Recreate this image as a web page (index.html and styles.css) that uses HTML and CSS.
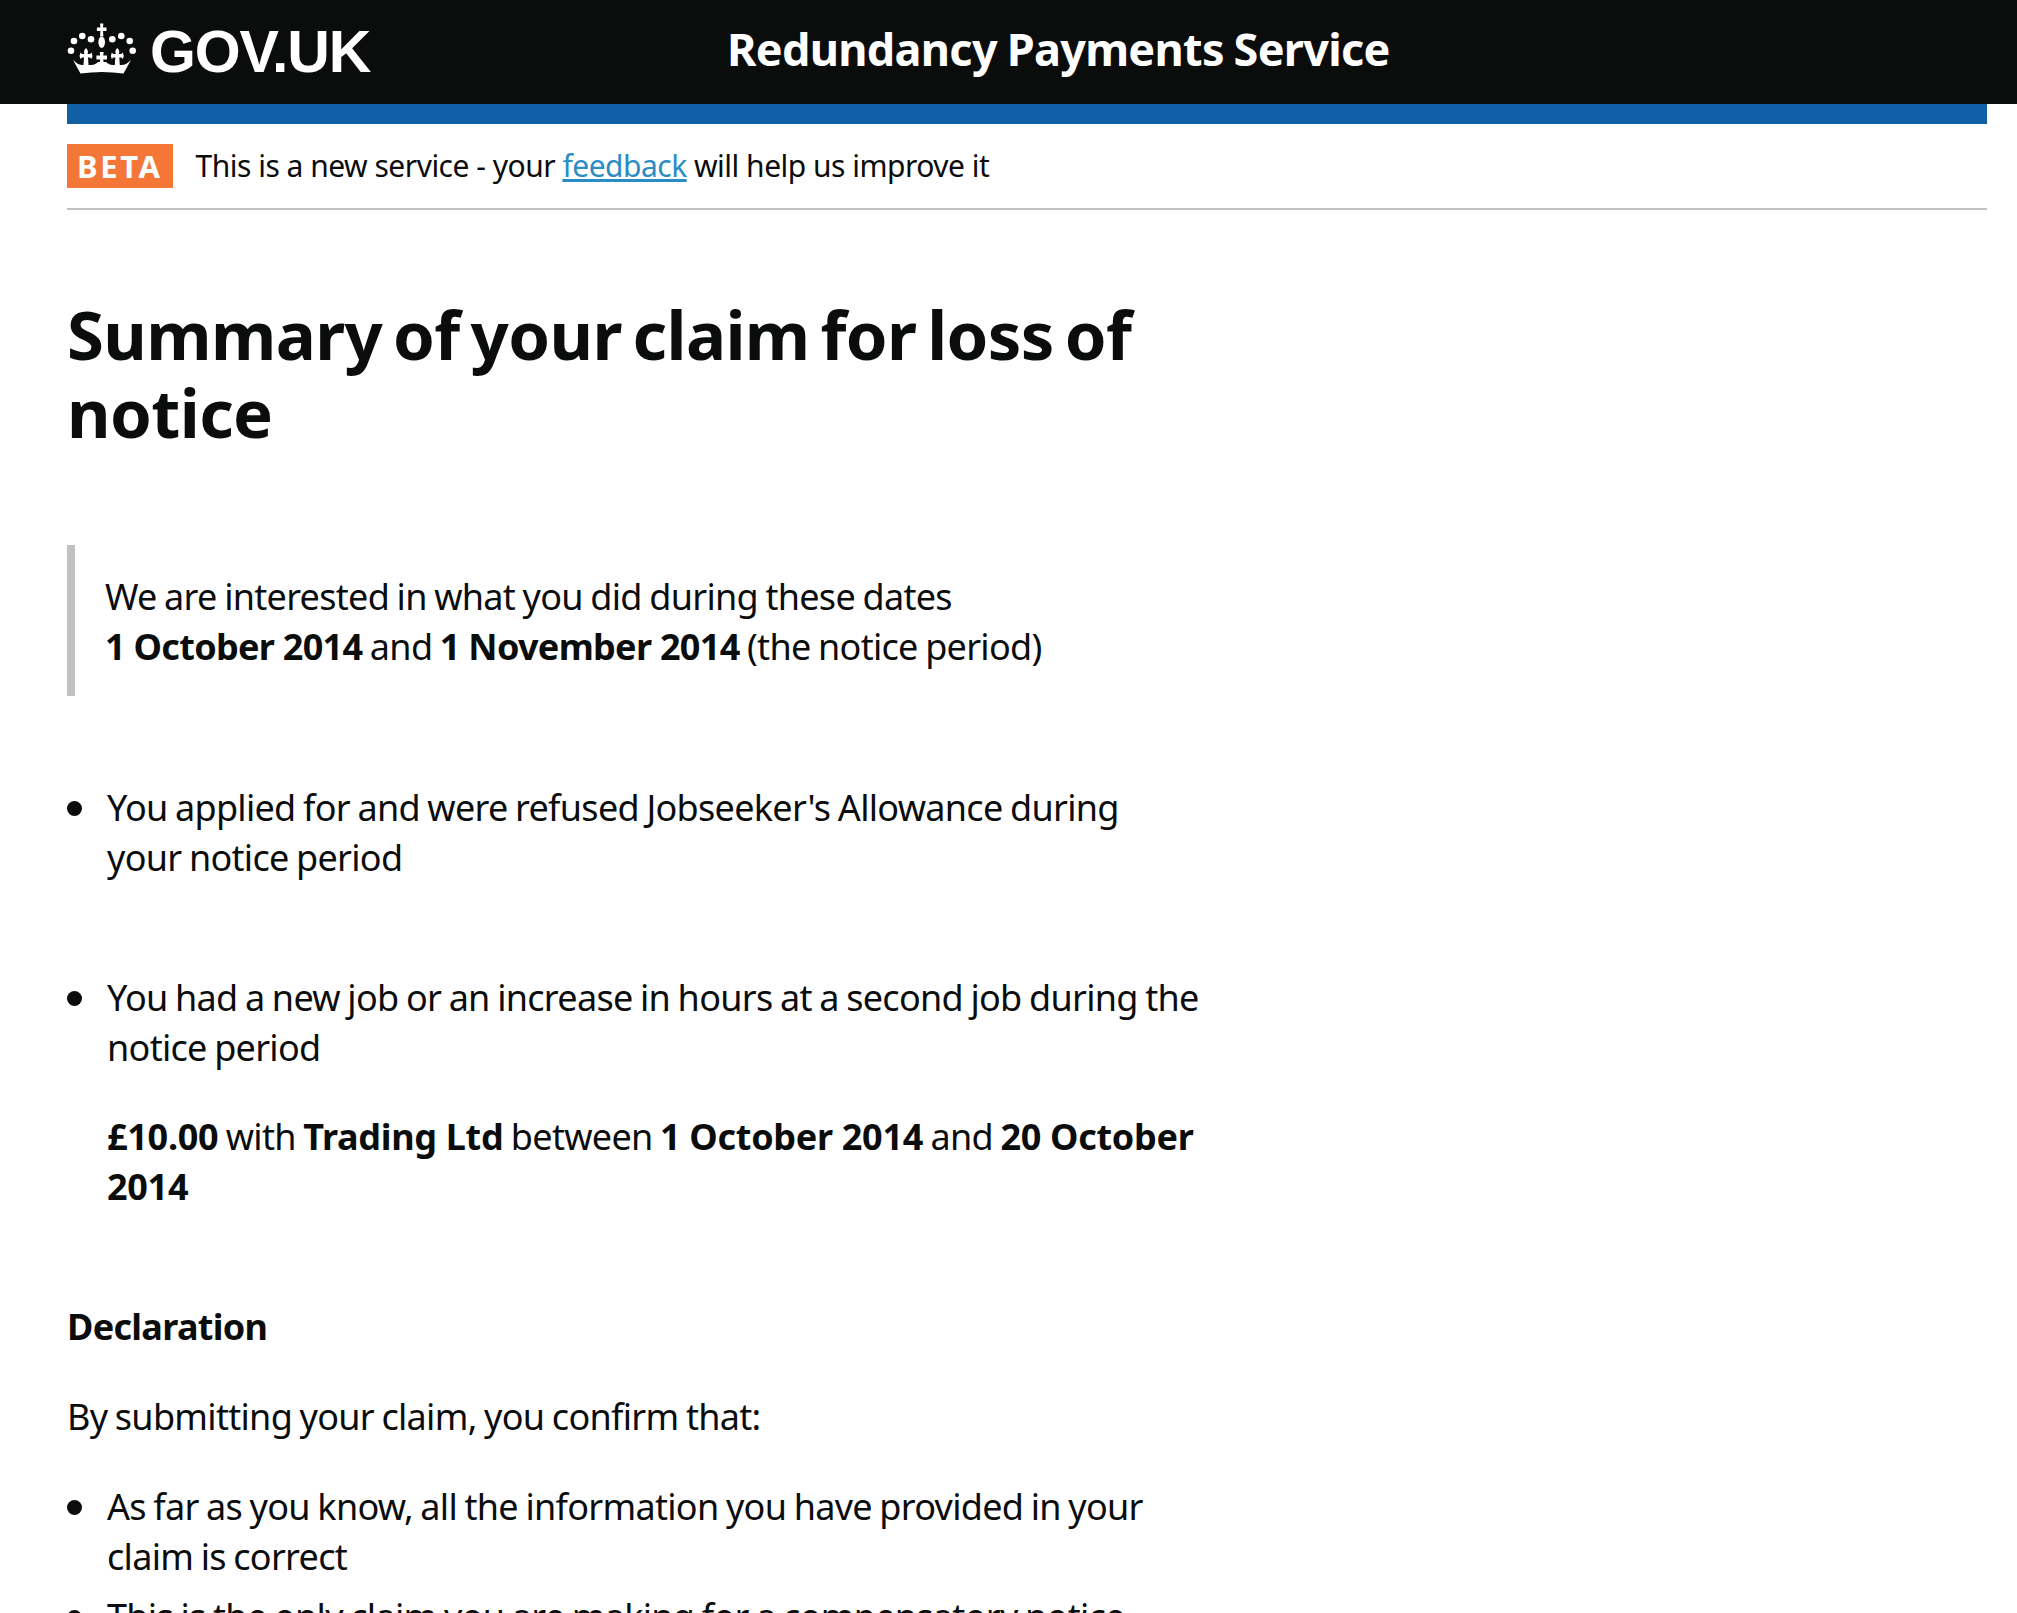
FILE: index.html
```html
<!DOCTYPE html>
<html>
<head>
<title>Summary of your claim for loss of notice</title>
<link rel="stylesheet" href="styles.css">
</head>
<body>
<header class="site-header">
  <a class="logo" href="#">
    <svg class="crown" viewBox="0 0 70 60" width="70" height="60">
      <g fill="#fff">
        <path d="M33 1.5H36.4L36 5.5H39.5V9H36L36.4 14.5H33L33.4 9H29.9V5.5H33.4Z"/>
        <ellipse cx="34.7" cy="20.3" rx="3.3" ry="5.7"/>
        <circle cx="24" cy="17.3" r="3.3"/>
        <circle cx="45.3" cy="17.3" r="3.3"/>
        <circle cx="15.3" cy="14" r="3.3"/>
        <circle cx="54.3" cy="14" r="3.3"/>
        <circle cx="7" cy="19" r="3.3"/>
        <circle cx="62.7" cy="19" r="3.3"/>
        <circle cx="4" cy="28.7" r="3.3"/>
        <circle cx="65.7" cy="28.7" r="3.3"/>
        <path d="M6 38C9 41 12 43 16 43H24C27 43 29 42 31 40H39C41 42 43 43 46 43H54C58 43 61 41 64 38L56.5 51.5Q35 48.5 13.5 51.5Z"/>
        <path d="M19 26C21 28 21.5 30 20.5 32H23L24.5 30.5 25.5 34 24.5 37 23 35.5H21L21.5 43H16.5L17 35.5H15L13.5 37 12.5 34 13.5 30.5 15 32H17.5C16.5 30 17 28 19 26Z"/>
        <path d="M19 26C21 28 21.5 30 20.5 32H23L24.5 30.5 25.5 34 24.5 37 23 35.5H21L21.5 43H16.5L17 35.5H15L13.5 37 12.5 34 13.5 30.5 15 32H17.5C16.5 30 17 28 19 26Z" transform="translate(31.3 0)"/>
        <path d="M32.7 30H36.7L36.2 33.5H40V37.5H36.2L36.7 41H32.7L33.2 37.5H29.4V33.5H33.2Z"/>
      </g>
    </svg>
    <span class="logo-text">GOV.UK</span>
  </a>
  <a class="service-name" href="#">Redundancy Payments Service</a>
</header>

<div class="page">
  <div class="blue-bar"></div>
  <div class="phase-banner">
    <strong class="phase-tag">BETA</strong>
    <span>This is a new service - your <a href="#">feedback</a> will help us improve it</span>
  </div>

  <main class="main-col">
    <h1>Summary of your claim for loss of notice</h1>

    <div class="inset">
      We are interested in what you did during these dates<br>
      <b>1 October 2014</b> and <b>1 November 2014</b> (the notice period)
    </div>

    <ul class="answers">
      <li>You applied for and were refused Jobseeker's Allowance during<br>your notice period</li>
      <li>
        You had a new job or an increase in hours at a second job during the notice period
        <p><b>£10.00</b> with <b>Trading Ltd</b> between <b>1 October 2014</b> and <b>20 October 2014</b></p>
      </li>
    </ul>

    <h2>Declaration</h2>
    <p class="lead">By submitting your claim, you confirm that:</p>
    <ul class="bullets">
      <li>As far as you know, all the information you have provided in your claim is correct</li>
      <li>This is the only claim you are making for a compensatory notice payment</li>
    </ul>
  </main>
</div>
</body>
</html>
```

FILE: styles.css
```css
html, body {
  margin: 0;
  height: 1613px;
  overflow: hidden;
}

body {
  font-family: "Noto Sans", sans-serif;
  font-size: 36px;
  line-height: 50px;
  letter-spacing: -0.7px;
  word-spacing: -1.2px;
  color: #0b0c0c;
  background-color: #fff;
}

a {
  color: #2b8cc4;
}

b {
  font-weight: 700;
  word-spacing: 0;
}

.site-header {
  height: 104px;
  background-color: #0b0c0c;
  display: flex;
  padding-left: 67px;
}

.logo {
  width: 660px;
  display: flex;
  align-items: center;
  color: #fff;
  text-decoration: none;
  height: 104px;
}

.crown {
  margin-right: 13px;
  flex: none;
}

.logo-text {
  font-family: "Liberation Sans", sans-serif;
  font-weight: 700;
  font-size: 59px;
  letter-spacing: -1.2px;
}

.service-name {
  color: #fff;
  text-decoration: none;
  font-weight: 700;
  font-size: 45px;
  line-height: 98px;
  letter-spacing: -0.7px;
}

.page {
  margin: 0 30px 0 67px;
}

.blue-bar {
  height: 20px;
  background-color: #1160a6;
}

.phase-banner {
  display: flex;
  align-items: center;
  gap: 23px;
  height: 84px;
  border-bottom: 2px solid #bfc1c3;
  font-size: 30px;
  letter-spacing: -0.5px;
  word-spacing: 0;
}

.phase-tag {
  background-color: #f47738;
  color: #fff;
  height: 44px;
  line-height: 44px;
  padding: 0 10px;
  letter-spacing: 2.6px;
  font-size: 31px;
}

.main-col {
  width: 1140px;
}

h1 {
  margin: 0;
  padding-top: 85px;
  font-size: 67px;
  line-height: 78px;
  font-weight: 700;
  letter-spacing: -0.6px;
  word-spacing: -6px;
}

.inset {
  margin-top: 94px;
  border-left: 8px solid #bfc1c3;
  padding: 27px 0 24px 30px;
}

.answers, .bullets {
  list-style: none;
  margin: 0;
  padding: 0;
}

.answers {
  margin-top: 87px;
}

.answers li, .bullets li {
  position: relative;
  padding-left: 40px;
}

.answers li {
  margin-bottom: 90px;
}

.answers li p {
  margin: 39px 0 0;
}

.answers li p b {
  letter-spacing: -0.3px;
}

.bullets li {
  margin-bottom: 10px;
}

.answers li::before, .bullets li::before {
  content: "";
  position: absolute;
  left: 0;
  top: 18px;
  width: 15px;
  height: 15px;
  border-radius: 50%;
  background-color: #0b0c0c;
}

h2 {
  margin: 0;
  font-size: 36px;
  line-height: 50px;
  font-weight: 700;
}

.lead {
  margin: 40px 0 40px;
}
```
